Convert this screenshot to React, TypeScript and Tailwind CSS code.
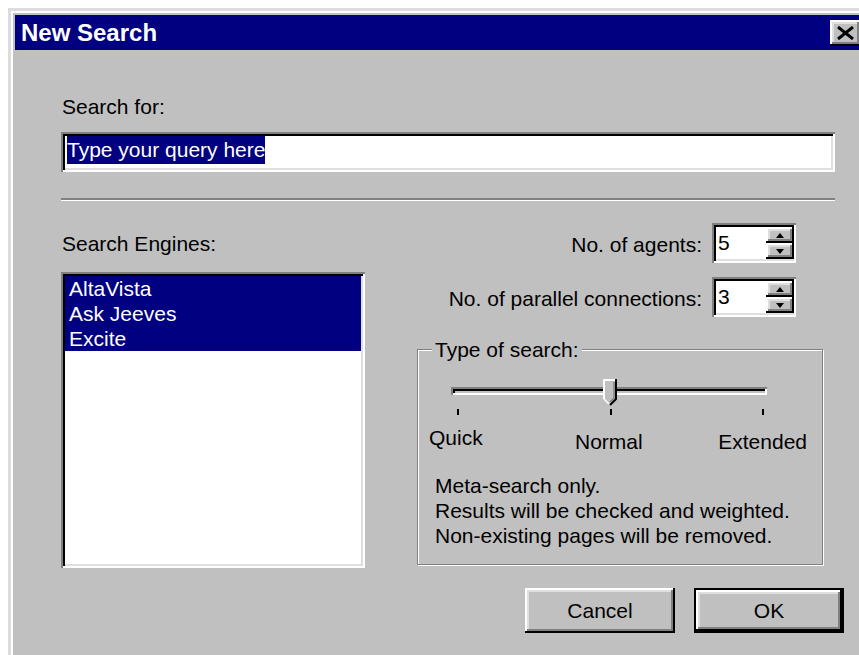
import React from "react";

const raised =
  "shadow-[inset_-2px_-2px_0_#000,inset_2px_2px_0_#fff,inset_-4px_-4px_0_#808080,inset_4px_4px_0_#dfdfdf]";
const sunken =
  "shadow-[inset_2px_2px_0_#808080,inset_-2px_-2px_0_#fff,inset_4px_4px_0_#000,inset_-4px_-4px_0_#dfdfdf]";

function SpinBox({ value }: { value: string }) {
  return (
    <div className={`w-[84px] h-[40px] bg-white flex p-[4px] ${sunken}`}>
      <div className="flex-1 flex items-center pl-[2px] text-[21px] leading-[24px]">{value}</div>
      <div className="w-[28px] flex flex-col mr-[-2px]">
        <div className={`h-[16px] bg-[#c0c0c0] flex items-center justify-center ${raised}`}>
          <svg width="8" height="5" viewBox="0 0 8 5">
            <path d="M4 0 L8 5 L0 5 Z" fill="#000" />
          </svg>
        </div>
        <div className={`h-[16px] bg-[#c0c0c0] flex items-center justify-center ${raised}`}>
          <svg width="8" height="5" viewBox="0 0 8 5">
            <path d="M0 0 L8 0 L4 5 Z" fill="#000" />
          </svg>
        </div>
      </div>
    </div>
  );
}

export default function App() {
  return (
    <div className="w-[859px] h-[655px] overflow-hidden bg-white pl-[8px] pt-[8px] font-['Liberation_Sans',Arial,sans-serif] text-black">
      {/* window frame */}
      <div className="w-[900px] h-[700px] border-t-[3px] border-l-[3px] border-[#dcdcdc] bg-white pl-[2px] pt-[2px]">
        <div className="h-full bg-[#c0c0c0] pl-[2px] pt-[2px]">
          {/* title bar */}
          <div className="h-[35px] w-[848px] bg-[#000080] flex items-center pl-[6px] pr-[2px]">
            <span className="text-white font-bold text-[24px] leading-[35px]">New Search</span>
            <div className={`ml-auto w-[31px] h-[26px] bg-[#c0c0c0] flex items-center justify-center ${raised}`}>
              <svg width="19" height="14" viewBox="0 0 19 14">
                <path d="M2 1 L17 13 M17 1 L2 13" stroke="#000" strokeWidth="3" fill="none" />
              </svg>
            </div>
          </div>

          {/* dialog body */}
          <div className="pl-[46px] pt-[45px]">
            <div className="pl-[1px] text-[21px] leading-[24px]">Search for:</div>
            <div className={`mt-[13px] w-[774px] h-[40px] bg-white pl-[6px] pt-[4px] ${sunken}`}>
              <span className="inline-block bg-[#000080] text-white text-[21px] leading-[28px] h-[28px]">
                Type your query here
              </span>
            </div>
            <div className="mt-[26px] w-[774px] h-[3px] border-t-2 border-b border-t-[#808080] border-b-white" />

            <div className="flex items-start">
              {/* engines list */}
              <div className="w-[304px]">
                <div className="mt-[31px] pl-[1px] text-[21px] leading-[24px]">Search Engines:</div>
                <div className={`mt-[16px] h-[296px] bg-white p-[4px] ${sunken}`}>
                  {["AltaVista", "Ask Jeeves", "Excite"].map((name) => (
                    <div key={name} className="h-[25px] bg-[#000080] text-white pl-[4px] text-[21px] leading-[25px]">
                      {name}
                    </div>
                  ))}
                </div>
              </div>

              {/* options */}
              <div className="ml-[52px] w-[427px]">
                <div className="mt-[22px] flex justify-end items-center pr-[48px]">
                  <span className="mr-[10px] mt-[3px] text-[21px] leading-[24px]">No. of agents:</span>
                  <SpinBox value="5" />
                </div>
                <div className="mt-[14px] flex justify-end items-center pr-[48px]">
                  <span className="mr-[10px] mt-[3px] text-[21px] leading-[24px]">No. of parallel connections:</span>
                  <SpinBox value="3" />
                </div>

                {/* type of search group */}
                <div className="mt-[32px] w-[406px] relative border border-[#808080] shadow-[inset_1px_1px_0_#fff,1px_1px_0_#fff] pt-[29px] pb-[16px]">
                  <span className="absolute left-[14px] top-[-12px] px-[3px] bg-[#c0c0c0] text-[21px] leading-[24px]">
                    Type of search:
                  </span>
                  <div className="ml-[33px] w-[316px] h-[27px] pt-[8px] relative">
                    <div className="h-[8px] bg-[#c0c0c0] shadow-[inset_2px_2px_0_#808080,inset_-2px_-2px_0_#fff,inset_4px_4px_0_#000]" />
                    <svg className="absolute left-[152px] top-0" width="14" height="27" viewBox="0 0 14 27">
                      <path d="M1 1 H13 V20 L7 26 L1 20 Z" fill="#c0c0c0" />
                      <path d="M1 20 V1 H12" stroke="#fff" strokeWidth="2" fill="none" />
                      <path d="M13 0 V20 L7 26" stroke="#000" strokeWidth="2" fill="none" />
                      <path d="M11 3 V19 L7 23" stroke="#808080" strokeWidth="1.5" fill="none" />
                      <path d="M1 20 L6 25" stroke="#fff" strokeWidth="1.5" fill="none" />
                    </svg>
                  </div>
                  <div className="mt-[3px] ml-[39px] w-[307px] flex justify-between">
                    <div className="w-[2px] h-[6px] bg-black" />
                    <div className="w-[2px] h-[6px] bg-black" />
                    <div className="w-[2px] h-[6px] bg-black" />
                  </div>
                  <div className="flex items-start pl-[11px] pr-[15px] text-[21px] leading-[24px]">
                    <span className="w-[146px] mt-[11px]">Quick</span>
                    <span className="mt-[15px]">Normal</span>
                    <span className="ml-auto mt-[15px]">Extended</span>
                  </div>
                  <div className="mt-[19px] pl-[17px] text-[21px] leading-[25px]">
                    <div>Meta-search only.</div>
                    <div>Results will be checked and weighted.</div>
                    <div>Non-existing pages will be removed.</div>
                  </div>
                </div>

                {/* buttons */}
                <div className="mt-[23px] flex justify-end gap-[19px]">
                  <div className={`w-[150px] h-[45px] bg-[#c0c0c0] flex items-center justify-center text-[21px] leading-[24px] ${raised}`}>
                    Cancel
                  </div>
                  <div className="w-[150px] h-[45px] border-2 border-black">
                    <div className={`w-full h-full bg-[#c0c0c0] flex items-center justify-center text-[21px] leading-[24px] ${raised}`}>
                      OK
                    </div>
                  </div>
                </div>
              </div>
            </div>
          </div>
        </div>
      </div>
    </div>
  );
}
